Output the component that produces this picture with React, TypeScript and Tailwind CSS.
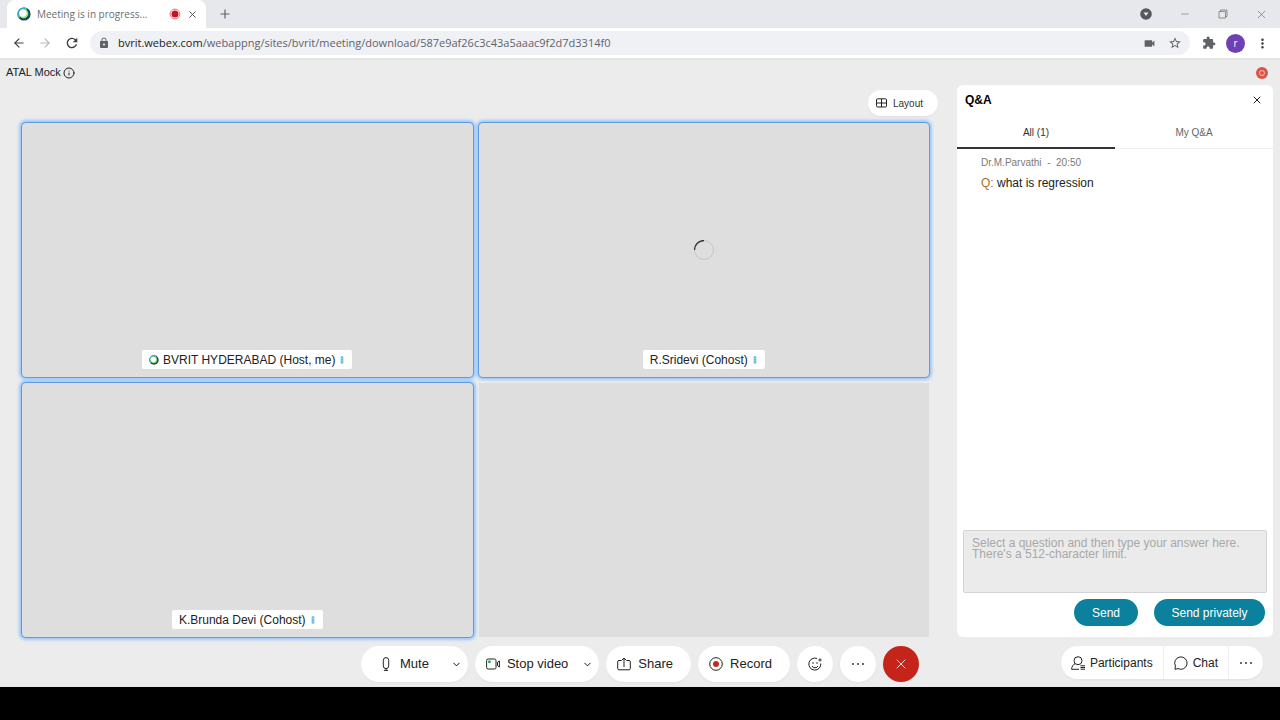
import { useState } from 'react'
import type { ReactNode } from 'react'
import { ArrowLeft, ArrowRight, ChevronDown, Info, Minus, Plus, X } from 'lucide-react'
import { MdExtension, MdLock, MdMoreVert, MdRefresh, MdStarBorder, MdVideocam } from 'react-icons/md'

interface Participant {
  name: string
  me?: boolean
  loading?: boolean
}

const participants: (Participant | null)[] = [
  { name: 'BVRIT HYDERABAD (Host, me)', me: true },
  { name: 'R.Sridevi (Cohost)', loading: true },
  { name: 'K.Brunda Devi (Cohost)' },
  null,
]

function WebexLogo({ className }: { className: string }) {
  return (
    <svg viewBox="0 0 14 14" className={className} aria-hidden="true">
      <circle cx="7" cy="7" r="6.6" fill="#0f4a52" />
      <path d="M2 11.300A6.600 6.600 0 0 1 10.500 1.400L7 7Z" fill="#2fb4cf" />
      <circle cx="6.700" cy="6.800" r="4.700" fill="#a3d977" />
      <circle cx="6" cy="6.100" r="3.700" fill="#fff" />
    </svg>
  )
}

function TinyMic() {
  return (
    <svg viewBox="0 0 6 10" className="w-1.5 h-2.5" aria-hidden="true">
      <rect x="1.5" y="1" width="3" height="8" rx="1.5" fill="#8fd6ea" />
      <path d="M3 1.5v7" stroke="#3ba6c6" strokeWidth="1" strokeDasharray="1.5 1" />
    </svg>
  )
}

function MicIcon() {
  return (
    <svg viewBox="0 0 14 14" className="w-3.5 h-3.5" fill="none" stroke="#222" aria-hidden="true">
      <rect x="4.300" y="0.600" width="5.400" height="11" rx="2.700" />
      <path d="M7 11.600v1.700M5 13.400h4" />
    </svg>
  )
}

function CameraIcon() {
  return (
    <svg viewBox="0 0 14 12" className="w-3.5 h-3" fill="none" stroke="#222" aria-hidden="true">
      <rect x="0.6" y="1" width="9.4" height="10" rx="1.5" />
      <path d="M11.500 4.200 13.400 3v6l-1.900-1.200Z" />
      <circle cx="3.400" cy="3.800" r="1.500" fill="#2fae60" stroke="none" />
    </svg>
  )
}

function ShareIcon() {
  return (
    <svg viewBox="0 0 14 14" className="w-3.5 h-3.5" fill="none" stroke="#222" aria-hidden="true">
      <path d="M4 3.500H2A1.300 1.300 0 0 0 .7 4.800V11.500A1.300 1.300 0 0 0 2 12.800h10a1.300 1.300 0 0 0 1.300-1.300V4.800A1.300 1.300 0 0 0 12 3.500H10" />
      <path d="M7 10V1M4.300 3.700 7 1l2.700 2.700" />
    </svg>
  )
}

function RecordIcon() {
  return (
    <svg viewBox="0 0 14 14" className="w-3.5 h-3.5" fill="none" aria-hidden="true">
      <circle cx="7" cy="7" r="6.3" stroke="#222" />
      <circle cx="7" cy="7" r="3" fill="#c5281c" />
    </svg>
  )
}

function ReactionIcon() {
  return (
    <svg viewBox="0 0 14 14" className="w-3.5 h-3.5" fill="none" stroke="#222" aria-hidden="true">
      <path d="M9 1.500A6 6 0 1 0 12.800 6.500" />
      <path d="M4 9a3.400 3.400 0 0 0 6 0" />
      <path d="M12 1.300v3.400M10.300 3h3.400" strokeWidth="0.900" />
      <circle cx="5" cy="6" r="0.800" fill="#222" stroke="none" />
      <circle cx="9" cy="6" r="0.800" fill="#222" stroke="none" />
    </svg>
  )
}

function DotsIcon() {
  return (
    <svg viewBox="0 0 14 4" className="w-3.5 h-1" fill="#222" aria-hidden="true">
      <circle cx="2" cy="2" r="0.900" />
      <circle cx="7" cy="2" r="0.900" />
      <circle cx="12" cy="2" r="0.900" />
    </svg>
  )
}

function PeopleIcon() {
  return (
    <svg viewBox="0 0 14 14" className="w-3.5 h-3.5" fill="none" stroke="#222" aria-hidden="true">
      <circle cx="7" cy="4.700" r="4" />
      <path d="M4 7.700C2 8.700.8 10.500.6 13.300H8" />
      <path d="M9.500 9.800H14M9.500 11.500H14M9.500 13.200H14" />
    </svg>
  )
}

function ChatIcon() {
  return (
    <svg viewBox="0 0 14 14" className="w-3.5 h-3.5" fill="none" stroke="#222" aria-hidden="true">
      <path d="M1 13.300 1.400 10A6.200 6.200 0 1 1 4 12.600Z" />
    </svg>
  )
}

function LayoutIcon() {
  return (
    <svg viewBox="0 0 11 10" className="w-[11px] h-2.5" fill="none" stroke="#222" aria-hidden="true">
      <rect x="0.500" y="0.800" width="10" height="8.200" rx="1.200" />
      <path d="M5.500 1v8M.5 5h10" />
    </svg>
  )
}

function BrowserBar() {
  return (
    <header className="font-['Open_Sans',sans-serif]">
      <div className="flex h-7 items-center bg-[#e7e8ec] pl-[7px] pr-3 text-[#5f6368]">
        <div className="flex h-full w-[199px] items-center rounded-t-lg bg-white pl-2.5 pr-2">
          <WebexLogo className="w-3.5 h-3.5 shrink-0" />
          <span className="ml-1.5 flex-1 truncate text-[10px] text-[#6b6e72]">Meeting is in progress...</span>
          <svg viewBox="0 0 12 12" className="mr-1.5 w-3 h-3" aria-hidden="true">
            <circle cx="6" cy="6" r="4.900" fill="none" stroke="#d9767c" />
            <circle cx="6" cy="6" r="3.500" fill="#c4141f" />
          </svg>
          <button aria-label="Close tab"><X size={11} className="text-[#44474a]" /></button>
        </div>
        <button aria-label="New tab" className="ml-3"><Plus size={14} /></button>
        <div className="ml-auto flex items-center gap-[27px]">
          <svg viewBox="0 0 12 12" className="w-3 h-3" aria-hidden="true">
            <circle cx="6" cy="6" r="5.800" fill="#55585c" />
            <path d="M3.500 4.500h5L6 8Z" fill="#e7e8ec" />
          </svg>
          <button aria-label="Minimize"><Minus size={12} strokeWidth={1} /></button>
          <button aria-label="Restore">
            <svg viewBox="0 0 10 10" className="w-2.5 h-2.5" fill="none" stroke="#777" strokeWidth="0.800" aria-hidden="true">
              <path d="M1 2.500h6.500V9H1ZM2.500 2.500V1H9v6.500H7.500" />
            </svg>
          </button>
          <button aria-label="Close window"><X size={13} strokeWidth={1.2} /></button>
        </div>
      </div>
      <div className="flex h-8 items-center border-b-2 border-[#e3e3e4] bg-white pl-3 pr-2.5 text-[#5f6368]">
        <button aria-label="Back"><ArrowLeft size={14} className="text-[#3c4043]" /></button>
        <button aria-label="Forward" className="ml-3"><ArrowRight size={14} className="text-[#b5b8bb]" /></button>
        <button aria-label="Reload" className="ml-3"><MdRefresh size={16} className="text-[#3c4043]" /></button>
        <div className="ml-2.5 mr-3 flex h-6 flex-1 items-center rounded-full bg-[#f0f1f5] px-2">
          <MdLock size={12} />
          <div className="ml-2 flex-1 text-[11px]">
            <span className="text-[#202124]">bvrit.webex.com</span>
            <span>/webappng/sites/bvrit/meeting/download/587e9af26c3c43a5aaac9f2d7d3314f0</span>
          </div>
          <MdVideocam size={13} className="mr-3" />
          <button aria-label="Bookmark"><MdStarBorder size={14} /></button>
        </div>
        <button aria-label="Extensions"><MdExtension size={14} /></button>
        <span className="ml-2.5 flex h-[19px] w-[19px] items-center justify-center rounded-full bg-[#6f3fb4] text-[10px] text-white">r</span>
        <button aria-label="Menu" className="ml-2.5"><MdMoreVert size={15} className="text-[#3c4043]" /></button>
      </div>
    </header>
  )
}

function Tile({ participant }: { participant: Participant | null }) {
  if (!participant) return <div className="bg-[#dedede]" />
  return (
    <div className="relative flex items-end justify-center rounded-sm bg-[#dedede] pb-2 shadow-[0_0_3px_3px_#9cc8f9] ring-1 ring-[#5f9be0]">
      {participant.loading && (
        <svg viewBox="0 0 20 20" className="absolute left-1/2 top-1/2 h-5 w-5 -translate-x-1/2 -translate-y-1/2" fill="none" aria-hidden="true">
          <circle cx="10" cy="10" r="9.500" stroke="#c6c6c6" />
          <path d="M.5 10A9.500 9.500 0 0 1 10 .5" stroke="#333" strokeWidth="1.300" />
        </svg>
      )}
      <div className="flex h-[19px] items-center rounded-xs bg-white px-[7px] text-xs text-[#222]">
        {participant.me && <WebexLogo className="mr-1 w-2.5 h-2.5" />}
        <span className="mr-1">{participant.name}</span>
        <TinyMic />
      </div>
    </div>
  )
}

function ControlButton({ icon, label, menu }: { icon: ReactNode; label: string; menu?: boolean }) {
  return (
    <div className={`flex h-9 items-center rounded-full bg-white shadow-xs ${menu ? 'pr-1.5' : 'pr-[18px]'}`}>
      <button className={`flex items-center gap-[7px] text-[13px] text-[#222] ${label === 'Mute' ? 'pl-[18px]' : 'pl-[11px]'}`}>
        {icon}
        {label}
      </button>
      {menu && (
        <button aria-label={`${label} options`} className={label === 'Mute' ? 'ml-[22px]' : 'ml-3.5'}>
          <ChevronDown size={11} />
        </button>
      )}
    </div>
  )
}

function QnaPanel() {
  const [tab, setTab] = useState('all')
  const tabClass = (id: string) =>
    `flex-1 pt-0.5 ${tab === id ? 'border-b-2 border-[#333] text-[#333]' : 'border-b border-[#eee] text-[#666]'}`

  return (
    <aside className="flex w-[316px] shrink-0 flex-col rounded-md bg-white">
      <div className="flex h-[30px] items-center justify-between pl-2 pr-2.5">
        <h2 className="text-xs font-bold text-black">Q&amp;A</h2>
        <button aria-label="Close panel"><X size={12} className="text-[#222]" /></button>
      </div>
      <div className="flex h-[34px] text-[10px]">
        <button className={tabClass('all')} onClick={() => setTab('all')}>All (1)</button>
        <button className={tabClass('mine')} onClick={() => setTab('mine')}>My Q&amp;A</button>
      </div>
      <div className="flex-1 pl-6 pt-1.5">
        <p className="text-[10px] leading-4 text-[#7a7a7a]">Dr.M.Parvathi&nbsp; -&nbsp; 20:50</p>
        <p className="mt-0.5 text-xs leading-5 text-[#222]"><span className="text-[#a8701c]">Q:</span> what is regression</p>
      </div>
      <textarea
        aria-label="Answer"
        placeholder={"Select a question and then type your answer here.\nThere's a 512-character limit."}
        className="mx-1.5 block h-[63px] resize-none rounded-xs border border-[#d4d4d4] bg-[#ebebeb] px-2 py-[7px] text-xs leading-[11px] placeholder:text-[#a8a8a8]"
      />
      <div className="mb-[11px] mr-2 mt-1.5 flex justify-end gap-4 text-xs text-white">
        <button className="h-[27px] w-16 rounded-full bg-[#0b819d]">Send</button>
        <button className="h-[27px] w-[111px] rounded-full bg-[#0b819d]">Send privately</button>
      </div>
    </aside>
  )
}

export default function App() {
  return (
    <div className="flex min-h-screen flex-col bg-[#ececec] font-['Liberation_Sans',Arial,sans-serif]">
      <BrowserBar />

      <div className="flex h-[25px] items-center pl-1.5 pr-3 text-[11px] text-[#222]">
        <span>ATAL Mock</span>
        <Info size={12} className="ml-0.5" />
        <span className="ml-auto flex h-3 w-3 items-center justify-center rounded-full bg-[#dc5548]">
          <span className="h-1.5 w-1.5 rounded-full border border-white/60" />
        </span>
      </div>

      <main className="flex flex-1 pr-[7px]">
        <section className="flex flex-1 flex-col pl-[22px]">
          <div className="flex h-[38px] items-start justify-end pr-[19px] pt-[5px]">
            <button className="flex h-[26px] items-center gap-1.5 rounded-full bg-white pl-2 pr-[15px] text-[10px] text-[#333] shadow-xs">
              <LayoutIcon />
              Layout
            </button>
          </div>
          <div className="mr-7 grid flex-1 grid-cols-2 grid-rows-2 gap-1.5">
            {participants.map((p, i) => <Tile key={i} participant={p} />)}
          </div>
        </section>
        <QnaPanel />
      </main>

      <footer className="grid h-[50px] grid-cols-[1fr_auto_1fr] items-start pt-[9px]">
        <div className="col-start-2 flex gap-[7px]">
          <ControlButton icon={<MicIcon />} label="Mute" menu />
          <ControlButton icon={<CameraIcon />} label="Stop video" menu />
          <ControlButton icon={<ShareIcon />} label="Share" />
          <ControlButton icon={<RecordIcon />} label="Record" />
          <button aria-label="Reactions" className="flex h-9 w-9 items-center justify-center rounded-full bg-white shadow-xs"><ReactionIcon /></button>
          <button aria-label="More options" className="flex h-9 w-9 items-center justify-center rounded-full bg-white shadow-xs"><DotsIcon /></button>
          <button aria-label="Leave meeting" className="flex h-9 w-9 items-center justify-center rounded-full bg-[#c5241b] text-white"><X size={16} strokeWidth={1.3} /></button>
        </div>
        <div className="mr-[17px] flex h-[33px] items-center justify-self-end divide-x divide-[#eee] rounded-full bg-white text-xs text-[#222] shadow-xs">
          <button className="flex h-full items-center gap-[5px] px-2.5"><PeopleIcon />Participants</button>
          <button className="flex h-full items-center gap-[5px] px-2.5"><ChatIcon />Chat</button>
          <button aria-label="More panels" className="flex h-full items-center px-2.5"><DotsIcon /></button>
        </div>
      </footer>
      <div className="h-[33px] bg-black" />
    </div>
  )
}
